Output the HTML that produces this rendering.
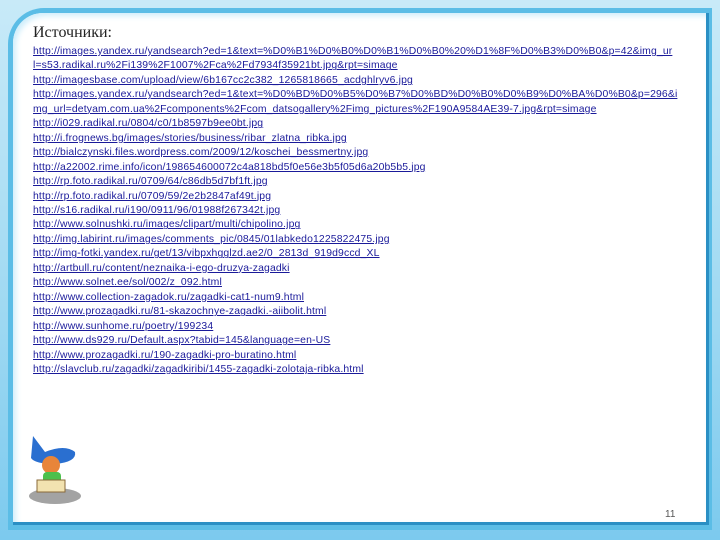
<!DOCTYPE html>
<html><head><meta charset="utf-8"><style>
body{margin:0;width:720px;height:540px;overflow:hidden;background:linear-gradient(180deg,#c8eaf8,#9dd8f2 60%,#7ccaee);font-family:"Liberation Sans",sans-serif;position:relative}
.frame{position:absolute;left:8px;top:8px;width:704px;height:522px;border-radius:36px 0 0 0;background:#5bbde6;}
.panel{position:absolute;left:13px;top:13px;width:693px;height:509px;background:#fff;border-radius:30px 0 0 0;border-bottom:3px solid #2a8fc4;border-right:3px solid #2a8fc4;box-shadow:inset 3px 3px 6px #cfeefb}
h1{position:absolute;left:33px;top:24px;margin:0;font:normal 16px "Liberation Serif",serif;color:#222}
.links{position:absolute;left:33px;top:45px;font-size:10.4px;line-height:14.45px;color:#1a1a9a;white-space:nowrap;letter-spacing:0.15px}
.links div{text-decoration:underline}
.num{position:absolute;left:665px;top:509px;font-size:10px;color:#555}
.kid{position:absolute;left:25px;top:432px}
</style></head><body>
<div class="frame"></div><div class="panel"></div>
<h1>Источники:</h1>
<div class="links">
<div>http://images.yandex.ru/yandsearch?ed=1&amp;text=%D0%B1%D0%B0%D0%B1%D0%B0%20%D1%8F%D0%B3%D0%B0&amp;p=42&amp;img_ur</div>
<div>l=s53.radikal.ru%2Fi139%2F1007%2Fca%2Fd7934f35921bt.jpg&amp;rpt=simage</div>
<div>http://imagesbase.com/upload/view/6b167cc2c382_1265818665_acdghlryv6.jpg</div>
<div>http://images.yandex.ru/yandsearch?ed=1&amp;text=%D0%BD%D0%B5%D0%B7%D0%BD%D0%B0%D0%B9%D0%BA%D0%B0&amp;p=296&amp;i</div>
<div>mg_url=detyam.com.ua%2Fcomponents%2Fcom_datsogallery%2Fimg_pictures%2F190A9584AE39-7.jpg&amp;rpt=simage</div>
<div>http://i029.radikal.ru/0804/c0/1b8597b9ee0bt.jpg</div>
<div>http://i.frognews.bg/images/stories/business/ribar_zlatna_ribka.jpg</div>
<div>http://bialczynski.files.wordpress.com/2009/12/koschei_bessmertny.jpg</div>
<div>http://a22002.rime.info/icon/198654600072c4a818bd5f0e56e3b5f05d6a20b5b5.jpg</div>
<div>http://rp.foto.radikal.ru/0709/64/c86db5d7bf1ft.jpg</div>
<div>http://rp.foto.radikal.ru/0709/59/2e2b2847af49t.jpg</div>
<div>http://s16.radikal.ru/i190/0911/96/01988f267342t.jpg</div>
<div>http://www.solnushki.ru/images/clipart/multi/chipolino.jpg</div>
<div>http://img.labirint.ru/images/comments_pic/0845/01labkedo1225822475.jpg</div>
<div>http://img-fotki.yandex.ru/get/13/vibpxhgglzd.ae2/0_2813d_919d9ccd_XL</div>
<div>http://artbull.ru/content/neznaika-i-ego-druzya-zagadki</div>
<div>http://www.solnet.ee/sol/002/z_092.html</div>
<div>http://www.collection-zagadok.ru/zagadki-cat1-num9.html</div>
<div>http://www.prozagadki.ru/81-skazochnye-zagadki.-aiibolit.html</div>
<div>http://www.sunhome.ru/poetry/199234</div>
<div>http://www.ds929.ru/Default.aspx?tabid=145&amp;language=en-US</div>
<div>http://www.prozagadki.ru/190-zagadki-pro-buratino.html</div>
<div>http://slavclub.ru/zagadki/zagadkiribi/1455-zagadki-zolotaja-ribka.html</div>
</div>
<svg class="kid" width="60" height="75" viewBox="0 0 60 75">
<ellipse cx="30" cy="64" rx="26" ry="8" fill="#666" opacity=".6"/>
<path d="M8 4 L20 20 Q40 12 50 20 Q52 30 30 32 Q10 32 6 26 Z" fill="#2a6fd0"/>
<circle cx="26" cy="33" r="9" fill="#e8853a"/>
<rect x="18" y="40" width="18" height="12" rx="4" fill="#4cc04c"/>
<rect x="12" y="48" width="28" height="12" fill="#f2e2b0" stroke="#8a6a3a"/>
</svg>
<div class="num">11</div>
</body></html>
